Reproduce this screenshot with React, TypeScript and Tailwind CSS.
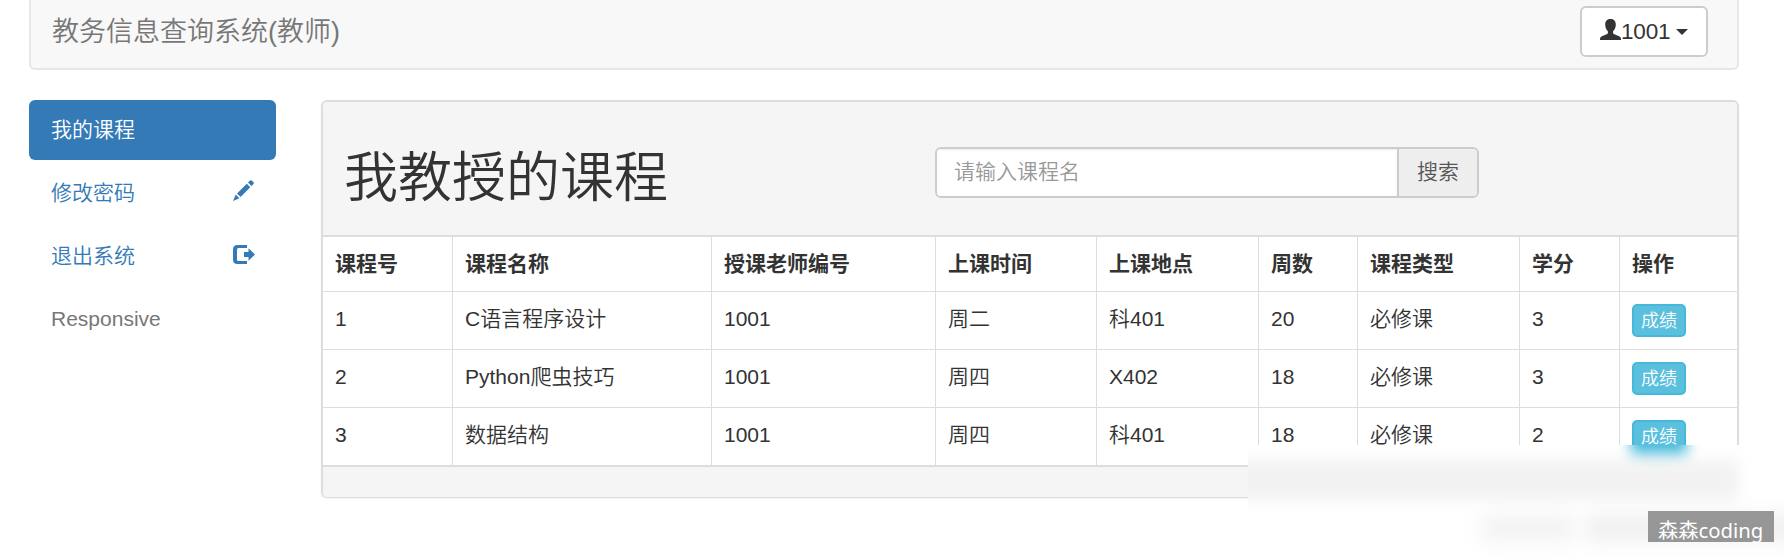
import React from "react";

const columns = ["课程号", "课程名称", "授课老师编号", "上课时间", "上课地点", "周数", "课程类型", "学分", "操作"];

const courses = [
  ["1", "C语言程序设计", "1001", "周二", "科401", "20", "必修课", "3"],
  ["2", "Python爬虫技巧", "1001", "周四", "X402", "18", "必修课", "3"],
  ["3", "数据结构", "1001", "周四", "科401", "18", "必修课", "2"],
];

const grid = "grid grid-cols-[130px_259px_224px_161px_162px_99px_162px_100px_117px]";

function PencilIcon() {
  return (
    <svg className="mb-[5px] h-[21px] w-[21px]" viewBox="0 0 21 21" fill="currentColor">
      <path d="M15 2.600 17.100.5q.8-.7 1.600 0l1.800 1.800q.8.8 0 1.600l-2.100 2.100zM13.800 3.700 17.300 7.200 7.500 17 4 13.500zM2.700 14.500 6.400 18.300 0 21z" />
    </svg>
  );
}

function LogoutIcon() {
  return (
    <svg className="-mr-px mb-[3px] h-[19px] w-[22px]" viewBox="0 0 22 19" fill="currentColor">
      <path d="M14 0v3H5.500Q4 3 4 4.500v10Q4 16 5.500 16H14v3H4.500q-4.500 0-4.500-4.500v-10Q0 0 4.500 0zM15.500 3.200l6.500 6.300-6.500 6.300V12H11V7h4.500z" />
    </svg>
  );
}

function UserIcon() {
  return (
    <svg className="mb-1 h-[21px] w-[21px]" viewBox="0 0 21 21" fill="currentColor">
      <path d="M10.500 0c3.300 0 5.300 2 5.300 5.500 0 3-1.200 5.500-2.700 6.800v1.500c0 .7.500 1.200 1.300 1.500l4.700 2q1.900.8 1.900 2.700v1H0v-1q0-1.900 1.900-2.700l4.700-2c.8-.3 1.300-.8 1.300-1.500v-1.500C6.400 11 5.200 8.500 5.200 5.500 5.200 2 7.200 0 10.500 0z" />
    </svg>
  );
}

export default function App() {
  return (
    <div className="relative h-[557px] w-[1784px] overflow-hidden bg-white pl-[29px] font-['Liberation_Sans','Noto_Sans_CJK_SC',sans-serif] text-[21px] leading-[30px] font-[350] text-[#333]">
      <header className="flex h-[70px] w-[1710px] items-start justify-between rounded-b-[6px] border-2 border-t-0 border-[#e7e7e7] bg-[#f8f8f8] pr-[29px] pl-[21px]">
        <div className="pt-[17px] text-[27px] text-[#777]">教务信息查询系统(教师)</div>
        <button className="mt-1.5 flex h-[51px] w-[128px] items-center rounded-[6px] border-2 border-[#ccc] bg-white pl-[18px]">
          <UserIcon />
          <span className="text-[22.5px] tracking-[-0.2px]">1001</span>
          <span className="ml-1.5 border-x-[6px] border-t-[6px] border-x-transparent border-t-[#333]" />
        </button>
      </header>

      <div className="mt-[30px] flex items-start gap-[45px]">
        <nav className="flex w-[247px] flex-col gap-[3px]">
          <a className="flex h-[60px] items-center rounded-[6px] bg-[#337ab7] px-[22px] text-white">我的课程</a>
          <a className="flex h-[60px] items-center justify-between px-[22px] text-[#337ab7]">
            <span className="pb-px">修改密码</span>
            <PencilIcon />
          </a>
          <a className="flex h-[60px] items-center justify-between px-[22px] text-[#337ab7]">
            <span className="pb-px">退出系统</span>
            <LogoutIcon />
          </a>
          <a className="flex h-[60px] items-center px-[22px] text-[#777]">Responsive</a>
        </nav>

        <section className="w-[1418px] overflow-hidden rounded-[6px] border-2 border-b border-[#ddd] bg-white shadow-[0_1px_2px_rgba(0,0,0,0.05)]">
          <div className="flex h-[135px] items-start border-b-2 border-[#ddd] bg-[#f5f5f5] pl-[21px]">
            <h1 className="w-[591px] pt-[46px] text-[54px] leading-[60px]">我教授的课程</h1>
            <div className="mt-[45px] flex h-[51px] w-[544px] overflow-hidden rounded-[6px] border-2 border-[#ccc]">
              <input
                className="w-[460px] bg-white pb-0.5 pl-[17px] shadow-[inset_0_1px_2px_rgba(0,0,0,0.075)] outline-none placeholder:text-[#999]"
                placeholder="请输入课程名"
              />
              <span className="flex flex-1 items-center justify-center border-l-2 border-[#ccc] bg-[#eee] pb-0.5 text-[#555]">搜索</span>
            </div>
          </div>

          <div className={`${grid} h-[55px] border-b border-[#ddd] font-bold`}>
            {columns.map((name) => (
              <div key={name} className="border-r border-[#ddd] pt-3 pl-3 last:border-r-0">{name}</div>
            ))}
          </div>
          {courses.map((course) => (
            <div key={course[0]} className={`${grid} h-[58px] border-b border-[#ddd]`}>
              {course.map((cell, i) => (
                <div key={i} className="border-r border-[#ddd] pt-3 pl-3">{cell}</div>
              ))}
              <div className="pt-3 pl-3">
                <button className="flex h-[33px] w-[54px] items-center justify-center rounded-[5px] border-2 border-[#46b8da] bg-[#5bc0de] text-[18px] text-white">
                  成绩
                </button>
              </div>
            </div>
          ))}
          <div className="-mt-px h-8 border-t-2 border-[#ddd] bg-[#f5f5f5]" />
        </section>
      </div>

      <div className="absolute top-[445px] left-[1248px] h-[112px] w-[536px] overflow-hidden bg-white">
        <div className="absolute top-[15px] -left-10 h-[40px] w-[531px] bg-[#f2f2f2] blur-[8px]" />
        <div className="absolute -top-5 left-[383px] h-[29px] w-[56px] bg-[#46b8da] blur-[7px]" />
        <div className="absolute top-[70px] left-[234px] h-[26px] w-[92px] bg-[#f2f2f2] blur-[10px]" />
        <div className="absolute top-[70px] left-[338px] h-[26px] w-[214px] bg-[#efefef] blur-[10px]" />
      </div>
      <div className="absolute top-[511px] left-[1648px] h-[31px] w-[126px] bg-[#969696] pt-1 pl-2.5 font-['Noto_Sans','Noto_Sans_CJK_SC',sans-serif] text-[20.3px] leading-[30px] font-normal whitespace-nowrap text-white">
        森森coding
      </div>
    </div>
  );
}
